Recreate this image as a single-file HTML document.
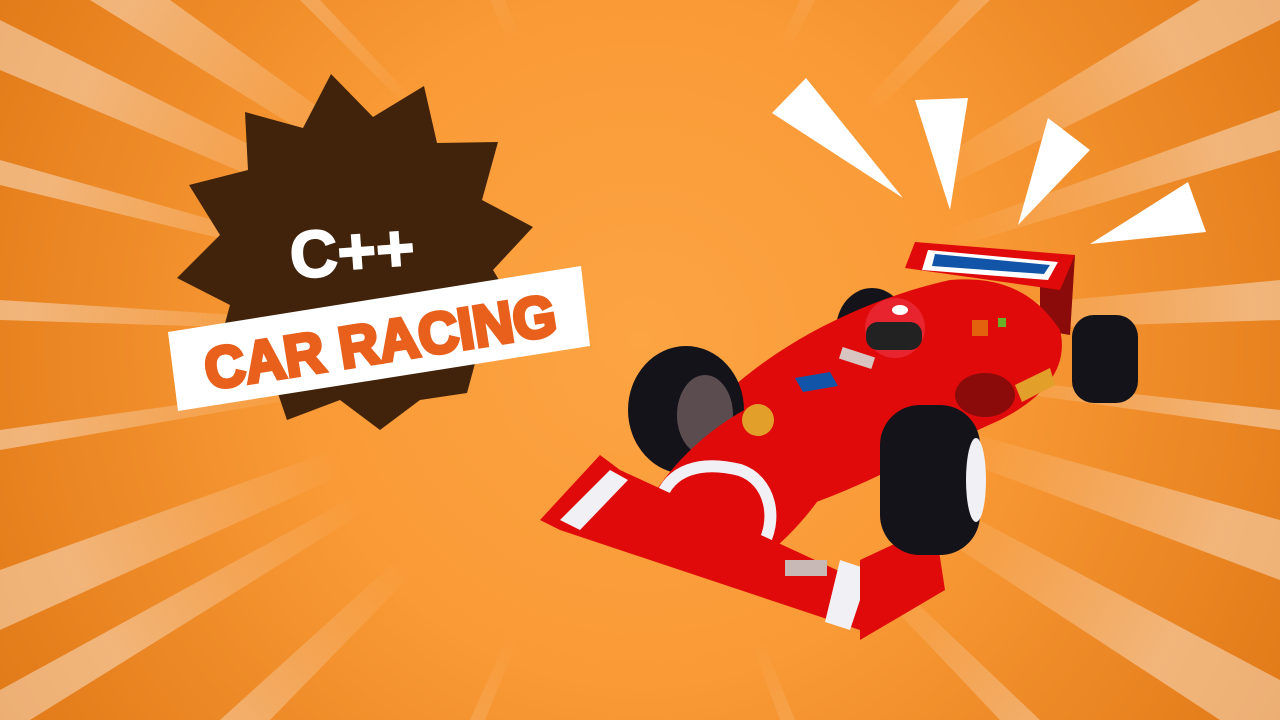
<!DOCTYPE html>
<html><head><meta charset="utf-8"><style>
html,body{margin:0;padding:0;width:1280px;height:720px;overflow:hidden}
svg{display:block}
</style></head><body>
<svg width="1280" height="720" viewBox="0 0 1280 720" xmlns="http://www.w3.org/2000/svg">
<defs>
<radialGradient id="bg" cx="640" cy="340" r="760" gradientUnits="userSpaceOnUse">
<stop offset="0" stop-color="#fda443"/><stop offset="0.45" stop-color="#f99a36"/><stop offset="1" stop-color="#e07816"/>
</radialGradient>
<radialGradient id="mg" cx="640" cy="340" r="720" gradientUnits="userSpaceOnUse">
<stop offset="0" stop-color="#000"/><stop offset="0.45" stop-color="#000"/><stop offset="0.85" stop-color="#fff"/><stop offset="1" stop-color="#fff"/>
</radialGradient>
<mask id="m"><rect width="1280" height="720" fill="url(#mg)"/></mask>
</defs>
<rect width="1280" height="720" fill="url(#bg)"/>
<g fill="#fff" opacity="0.4" mask="url(#m)">
<polygon points="640,340 0,20 0,70"/>
<polygon points="640,340 0,160 0,185"/>
<polygon points="640,340 0,300 0,320"/>
<polygon points="640,340 0,430 0,450"/>
<polygon points="640,340 0,570 0,630"/>
<polygon points="640,340 90,0 170,0"/>
<polygon points="640,340 300,0 320,0"/>
<polygon points="640,340 490,0 505,0"/>
<polygon points="640,340 800,0 815,0"/>
<polygon points="640,340 960,0 990,0"/>
<polygon points="640,340 1200,0 1280,0 1280,20"/>
<polygon points="640,340 1280,110 1280,150"/>
<polygon points="640,340 1280,280 1280,320"/>
<polygon points="640,340 1280,410 1280,430"/>
<polygon points="640,340 1280,520 1280,580"/>
<polygon points="640,340 1280,680 1280,720 1220,720"/>
<polygon points="640,340 1000,720 1040,720"/>
<polygon points="640,340 780,720 795,720"/>
<polygon points="640,340 470,720 485,720"/>
<polygon points="640,340 220,720 270,720"/>
<polygon points="640,340 0,690 0,720 30,720"/>
</g>
<!-- badge star -->
<polygon fill="#41230b" points="331,74 373,117 424,86 437,143 498,142 482,200 533,227 493,270 522,318 480,345 467,393 420,400 380,430 340,400 287,420 270,370 215,360 230,305 177,278 220,235 189,185 248,170 245,112 303,128"/>
<text x="352" y="274" font-family="Liberation Sans, sans-serif" font-weight="bold" font-size="66" fill="#fff" stroke="#fff" stroke-width="2" text-anchor="middle" transform="rotate(-4 352 250)">C++</text>
<polygon fill="#fff" points="168,332 581,266 590,346 178,411"/>
<text x="380" y="362" font-family="Liberation Sans, sans-serif" font-weight="bold" font-size="58" fill="#e8601c" text-anchor="middle" transform="rotate(-9 380 340)" textLength="355" lengthAdjust="spacingAndGlyphs" stroke="#e8601c" stroke-width="4">CAR RACING</text>
<!-- spikes -->
<g fill="#fff">
<polygon points="772,113 806,78 903,198"/>
<polygon points="915,100 968,98 950,210"/>
<polygon points="1048,118 1090,150 1018,225"/>
<polygon points="1188,182 1206,232 1090,244"/>
</g>
<!-- car -->
<g>
<rect x="1072" y="315" width="66" height="88" rx="22" fill="#15131a"/>
<ellipse cx="872" cy="330" rx="36" ry="42" fill="#15131a"/>
<polygon points="1040,270 1075,255 1070,335 1040,330" fill="#8b0b0b"/>
<polygon points="915,242 1075,255 1060,290 905,268" fill="#e00a0a"/>
<polygon points="928,250 1058,262 1048,280 922,270" fill="#fff"/>
<polygon points="935,254 1050,265 1044,274 932,266" fill="#1254a8"/>
<path d="M700,420 C760,350 860,300 950,280 C1010,275 1040,300 1060,330 C1070,370 1040,400 1000,420 L890,470 C850,490 800,510 760,520 L690,480 Z" fill="#e00a0a"/>
<ellipse cx="985" cy="395" rx="30" ry="22" fill="#8b0b0b"/>
<ellipse cx="686" cy="410" rx="58" ry="64" fill="#15131a"/>
<ellipse cx="705" cy="415" rx="28" ry="40" fill="#5b4d4f"/>
<path d="M650,500 C680,450 740,400 800,390 L860,420 C840,480 800,530 760,560 C720,580 670,570 655,540 Z" fill="#e00a0a"/>
<path d="M660,500 C670,470 700,460 740,470 C770,480 780,520 760,550 C740,575 690,575 668,555 Z" fill="none" stroke="#f0f0f5" stroke-width="12"/>
<polygon points="540,520 600,455 620,470 880,590 860,630 560,530" fill="#e00a0a"/>
<polygon points="560,520 610,470 628,480 580,530" fill="#f0f0f5"/>
<polygon points="840,560 870,570 850,630 825,622" fill="#f0f0f5"/>
<polygon points="860,560 935,525 945,590 860,640" fill="#e00a0a"/>
<rect x="785" y="560" width="42" height="16" fill="#c9b9b6"/>
<rect x="880" y="405" width="100" height="150" rx="40" fill="#15131a"/>
<ellipse cx="976" cy="480" rx="10" ry="42" fill="#f0f0f5"/>
<circle cx="895" cy="328" r="30" fill="#e8242e"/>
<rect x="866" y="322" width="56" height="28" rx="12" fill="#222"/>
<ellipse cx="900" cy="310" rx="8" ry="5" fill="#fff"/>
<polygon points="795,378 830,372 838,386 803,392" fill="#1254a8"/>
<circle cx="758" cy="420" r="16" fill="#e2a02a"/>
<rect x="840" y="352" width="34" height="12" fill="#d8c4c0" transform="rotate(18 857 358)"/>
<rect x="972" y="320" width="16" height="16" fill="#e2620e"/>
<rect x="998" y="318" width="8" height="9" fill="#6ab12a"/>
<polygon points="1015,385 1050,368 1055,385 1022,402" fill="#e2a02a"/>
</g>
</svg>
</body></html>
